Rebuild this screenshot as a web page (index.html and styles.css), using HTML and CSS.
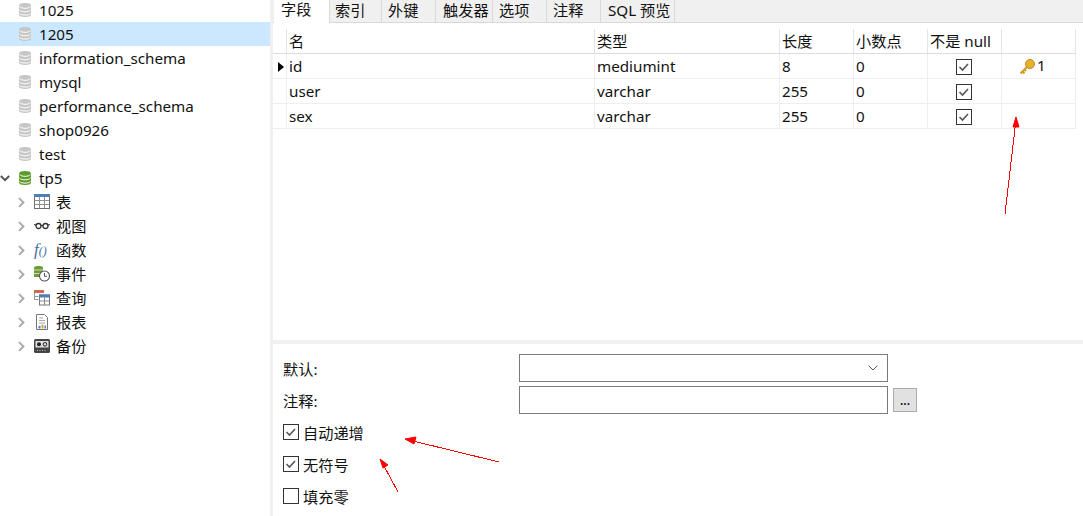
FILE: index.html
```html
<!DOCTYPE html>
<html lang="zh">
<head>
<meta charset="utf-8">
<title>tp5</title>
<link rel="stylesheet" href="styles.css">
</head>
<body>
<svg class="defs" width="0" height="0" aria-hidden="true">
  <symbol id="db" viewBox="0 0 12 14">
    <path d="M0 2.5C0 .8 2.5 0 6 0s6 .8 6 2.5v9C12 13.200 9.500 14 6 14s-6-.8-6-2.500z" fill="currentColor"/>
    <path d="M.5 3.500c1 1.300 3 1.800 5.500 1.800s4.500-.5 5.500-1.800M.5 7c1 1.300 3 1.800 5.500 1.800s4.500-.5 5.500-1.800M.5 10.300c1 1.300 3 1.800 5.500 1.800s4.500-.5 5.500-1.800" fill="none" stroke="#fff" stroke-width="1"/>
  </symbol>
  <symbol id="chev-r" viewBox="0 0 8 12"><path d="M1.200 1l5 5-5 5" fill="none" stroke="#a9a9a9" stroke-width="2.200"/></symbol>
  <symbol id="chev-d" viewBox="0 0 12 8"><path d="M1 1l5 5 5-5" fill="none" stroke="#555" stroke-width="2.400"/></symbol>
  <symbol id="tick" viewBox="0 0 16 16"><rect x=".5" y=".5" width="15" height="15" fill="#fff" stroke="#333"/><path d="M3.500 8l3 3 5.500-6" fill="none" stroke="#555" stroke-width="1.600"/></symbol>
</svg>

<div class="app">
  <nav class="sidebar">
    <div class="tree-row"><span class="twist"></span><svg class="db-icon"><use href="#db"/></svg><span>1025</span></div>
    <div class="tree-row selected"><span class="twist"></span><svg class="db-icon"><use href="#db"/></svg><span>1205</span></div>
    <div class="tree-row"><span class="twist"></span><svg class="db-icon"><use href="#db"/></svg><span>information_schema</span></div>
    <div class="tree-row"><span class="twist"></span><svg class="db-icon"><use href="#db"/></svg><span>mysql</span></div>
    <div class="tree-row"><span class="twist"></span><svg class="db-icon"><use href="#db"/></svg><span>performance_schema</span></div>
    <div class="tree-row"><span class="twist"></span><svg class="db-icon"><use href="#db"/></svg><span>shop0926</span></div>
    <div class="tree-row"><span class="twist"></span><svg class="db-icon"><use href="#db"/></svg><span>test</span></div>
    <div class="tree-row"><span class="twist"><svg class="chev-down"><use href="#chev-d"/></svg></span><svg class="db-icon open"><use href="#db"/></svg><span>tp5</span></div>

    <div class="tree-row child"><svg class="chev-right"><use href="#chev-r"/></svg>
      <svg class="obj-icon" viewBox="0 0 16 16"><rect x=".5" y=".5" width="15" height="14" fill="#fff" stroke="#6d6d6d"/><rect width="16" height="3" fill="#4d7fb8"/><path d="M.5 6.500h15M.5 10.500h15M5.500 3v11M10.500 3v11" stroke="#8f8f8f" fill="none"/></svg><span class="obj-label">表</span></div>
    <div class="tree-row child"><svg class="chev-right"><use href="#chev-r"/></svg>
      <svg class="obj-icon" viewBox="0 0 16 16"><circle cx="4.500" cy="8" r="2.500" fill="none" stroke="#333" stroke-width="1.300"/><circle cx="11.500" cy="8" r="2.500" fill="none" stroke="#333" stroke-width="1.300"/><path d="M7 7.500h2M2 7L0 6.500M14 7l2-.5" stroke="#333" fill="none"/></svg><span class="obj-label">视图</span></div>
    <div class="tree-row child"><svg class="chev-right"><use href="#chev-r"/></svg>
      <span class="fn-icon">f<small>()</small></span><span class="obj-label fn-label">函数</span></div>
    <div class="tree-row child"><svg class="chev-right"><use href="#chev-r"/></svg>
      <svg class="obj-icon" viewBox="0 0 16 16"><path d="M0 1.500C0 .5 2 0 4.500 0S9 .5 9 1.500V11H0z" fill="#6f9a3a"/><path d="M0 4h9M0 7.500h7" stroke="#cfe0b5"/><circle cx="10.500" cy="10" r="5" fill="#fff" stroke="#555" stroke-width="1.100"/><path d="M10.500 7v3.300h2.500" fill="none" stroke="#555"/></svg><span class="obj-label">事件</span></div>
    <div class="tree-row child"><svg class="chev-right"><use href="#chev-r"/></svg>
      <svg class="obj-icon" viewBox="0 0 16 16"><rect width="10" height="3" fill="#cf6a4f"/><path d="M.5 3v6.500h4M.5 6.500h4" stroke="#999" fill="none"/><rect x="5.500" y="5" width="10" height="10" fill="#fff" stroke="#777"/><rect x="5" y="4.500" width="11" height="3" fill="#4d7fb8"/><path d="M5.500 11h10M10.500 7.500V15" stroke="#888" fill="none"/></svg><span class="obj-label">查询</span></div>
    <div class="tree-row child"><svg class="chev-right"><use href="#chev-r"/></svg>
      <svg class="obj-icon" viewBox="0 0 16 16"><path d="M2.500.5h8l3 3v12h-11z" fill="#fff" stroke="#777"/><path d="M5 4h4M5 6.500h6M5 9h6" stroke="#aaa" fill="none"/><rect x="4.500" y="12" width="2" height="2.500" fill="#4d7fb8"/><rect x="7.500" y="10.500" width="2" height="4" fill="#e0a030"/><rect x="10.500" y="11.500" width="1.500" height="3" fill="#4d7fb8"/></svg><span class="obj-label">报表</span></div>
    <div class="tree-row child"><svg class="chev-right"><use href="#chev-r"/></svg>
      <svg class="obj-icon" viewBox="0 0 16 16"><rect y="1" width="16" height="14" rx="1.500" fill="#444"/><rect x="1.500" y="3" width="13" height="6.500" fill="#ddd"/><circle cx="5" cy="6.300" r="2" fill="#222"/><circle cx="11" cy="6.300" r="1.800" fill="none" stroke="#222"/><path d="M3 12.500h10" stroke="#bbb" stroke-dasharray="1 1.500"/></svg><span class="obj-label">备份</span></div>
  </nav>

  <main class="content">
    <div class="tabs">
      <div class="tab active">字段</div>
      <div class="tab t52">索引</div>
      <div class="tab t54">外键</div>
      <div class="tab t57">触发器</div>
      <div class="tab t54">选项</div>
      <div class="tab t54">注释</div>
      <div class="tab t74">SQL 预览</div>
    </div>

    <div class="fields">
      <div class="grid head">
        <div class="cell marker"></div><div class="cell">名</div><div class="cell">类型</div><div class="cell">长度</div><div class="cell">小数点</div><div class="cell">不是 null</div><div class="cell"></div>
      </div>
      <div class="grid">
        <div class="cell marker"><span class="caret"></span></div><div class="cell">id</div><div class="cell">mediumint</div><div class="cell">8</div><div class="cell">0</div><div class="cell center"><svg class="tick"><use href="#tick"/></svg></div>
        <div class="cell key"><svg class="key-icon" viewBox="0 0 16 16"><circle cx="11" cy="5" r="4.500" fill="#e8b030" stroke="#c08a1c"/><path d="M8 8l-6.500 6.500M3.500 12.500l2 2M5.500 10.500l1.500 1.500" fill="none" stroke="#d09a20" stroke-width="2"/></svg><span class="key-num">1</span></div>
      </div>
      <div class="grid">
        <div class="cell marker"></div><div class="cell">user</div><div class="cell">varchar</div><div class="cell">255</div><div class="cell">0</div><div class="cell center"><svg class="tick"><use href="#tick"/></svg></div><div class="cell"></div>
      </div>
      <div class="grid">
        <div class="cell marker"></div><div class="cell">sex</div><div class="cell">varchar</div><div class="cell">255</div><div class="cell">0</div><div class="cell center"><svg class="tick"><use href="#tick"/></svg></div><div class="cell"></div>
      </div>
    </div>

    <div class="splitter"></div>

    <form class="props">
      <div class="prop-row first">
        <span class="prop-label">默认:</span>
        <div class="box select"><svg class="select-arrow" viewBox="0 0 10 6"><path d="M.5 .5L5 5 9.500 .5" fill="none" stroke="#555"/></svg></div>
      </div>
      <div class="prop-row">
        <span class="prop-label">注释:</span>
        <div class="box"></div>
        <div class="more">...</div>
      </div>
      <div class="check-row"><svg class="tick"><use href="#tick"/></svg><span>自动递增</span></div>
      <div class="check-row"><svg class="tick"><use href="#tick"/></svg><span>无符号</span></div>
      <div class="check-row"><span class="unticked"></span><span>填充零</span></div>
    </form>
  </main>
</div>

<svg class="annotations" viewBox="0 0 1083 516" aria-hidden="true">
  <g stroke="#f00" stroke-width="1" fill="#f00">
    <path class="line" d="M1005 214L1015.500 124"/><path d="M1016 117l-3 10h6z"/>
    <path class="line" d="M499 462L415 441.500"/><path d="M405 439l11-2-2 7z"/>
    <path class="line" d="M398 492L384 466"/><path d="M380 459l8 6-5 3z"/>
  </g>
</svg>
</body>
</html>
```

FILE: styles.css
```css
* { box-sizing: border-box; }
html, body { margin: 0; height: 100%; overflow: hidden; background: #fff; }
body {
  position: relative;
  font-family: "Noto Sans", "Noto Sans CJK SC", sans-serif;
  font-size: 15.2px;
  color: #111;
}
.defs { position: absolute; }
.app { display: flex; height: 516px; background: #f0f0f0; }

.sidebar { width: 270px; flex: none; background: #fff; overflow: hidden; }
.tree-row { display: flex; align-items: center; height: 24px; white-space: nowrap; }
.tree-row:first-child { margin-top: -2px; }
.tree-row.selected { background: #cce8ff; }
.twist { width: 19px; height: 24px; flex: none; display: flex; align-items: center; }
.chev-down { width: 10px; height: 7px; }
.db-icon { width: 12px; height: 14px; flex: none; margin-right: 8px; color: #c6c6c6; }
.db-icon.open { color: #5d9c28; }
.child { padding-left: 18px; }
.chev-right { width: 7px; height: 11px; flex: none; margin-right: 9px; }
.obj-icon { width: 16px; height: 16px; flex: none; margin-right: 6px; }
.obj-label { margin-top: -2px; }
.fn-icon {
  width: 16px; flex: none; margin-right: 6px;
  font-family: "Liberation Serif", serif; font-style: italic; font-size: 17px; line-height: 20px;
  color: #3f6f9f; white-space: nowrap;
}
.fn-icon small { font-size: 12px; }

.content { flex: 1; min-width: 0; margin-left: 3px; display: flex; flex-direction: column; }
.tabs { flex: none; display: flex; height: 23px; border-bottom: 1px solid #d9d9d9; padding-left: 1px; background: #f0f0f0; }
.tab { height: 22px; line-height: 20px; padding-left: 6px; border-right: 1px solid #d9d9d9; width: 53px; white-space: nowrap; }
.tab.active { background: #fff; height: 23px; width: 56px; padding-left: 7px; line-height: 18px; }
.t52 { width: 52px; padding-left: 5px; }
.t54 { width: 54px; padding-left: 6px; }
.t57 { width: 57px; padding-left: 7px; }
.t74 { width: 74px; padding-left: 7px; }

.fields { flex: none; height: 317px; background: #fff; padding-top: 6px; }
.grid { display: grid; grid-template-columns: 14px 308px 185px 74px 74px 74px 74px; width: 803px; height: 25px; border-bottom: 1px solid #eee; }
.grid.head { border-bottom: 1px solid #ddd; }
.cell { border-right: 1px solid #eee; padding-left: 2px; line-height: 25px; white-space: nowrap; }
.head .cell { line-height: 24px; border-right-color: #e4e4e4; }
.marker { padding: 0; display: flex; align-items: center; justify-content: center; }
.caret { width: 0; height: 0; border-left: 6px solid #000; border-top: 5px solid transparent; border-bottom: 5px solid transparent; margin-left: 2px; }
.center { padding: 0 1px 0 0; display: flex; align-items: center; justify-content: center; }
.tick { width: 16px; height: 16px; flex: none; display: block; }
.key { display: flex; align-items: center; padding-left: 17px; }
.key-icon { width: 16px; height: 16px; margin-right: 2px; }
.key-num { line-height: 20px; margin-top: -4px; }

.splitter { flex: none; height: 4px; background: #f0f0f0; }
.props { flex: 1; background: #fff; padding-left: 10px; }
.prop-row { display: flex; align-items: center; height: 28px; margin-bottom: 4px; }
.prop-row.first { margin-top: 10px; }
.prop-label { width: 236px; flex: none; }
.box { width: 369px; height: 28px; border: 1px solid #7a7a7a; background: #fff; flex: none; display: flex; align-items: center; justify-content: flex-end; padding-right: 9px; }
.select-arrow { width: 10px; height: 6px; }
.more { width: 24px; height: 24px; margin-left: 5px; border: 1px solid #adadad; background: #e1e1e1; text-align: center; line-height: 24px; font-size: 12px; font-weight: 600; }
.check-row { display: flex; align-items: center; gap: 4px; height: 16px; margin-bottom: 16px; }
.prop-row + .prop-row + .check-row { margin-top: 10px; }
.check-row + .check-row + .check-row { margin-top: 1px; margin-bottom: 0; }
.unticked { width: 16px; height: 16px; border: 1px solid #333; background: #fff; flex: none; }

.annotations { position: absolute; left: 0; top: 0; width: 1083px; height: 516px; pointer-events: none; }
.line { shape-rendering: crispEdges; }
```
